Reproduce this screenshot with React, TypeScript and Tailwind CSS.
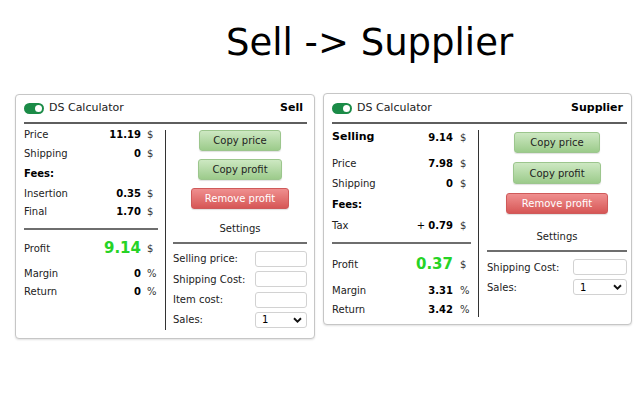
import React from "react";

type RowProps = {
  cls: string;
  label: React.ReactNode;
  value: React.ReactNode;
  unit?: string;
  gap?: string;
};

function Row({ cls, label, value, unit = "$", gap = "ml-[6px]" }: RowProps) {
  return (
    <div className={`flex items-center ${cls}`}>
      <div className="flex-1 text-[#222]">{label}</div>
      <div className="font-bold text-black text-right">{value}</div>
      <div className={`${gap} w-[11px] text-[#333]`}>{unit}</div>
    </div>
  );
}

function Toggle() {
  return (
    <div className="w-[20px] h-[11px] rounded-full bg-[#1b8b47] flex items-center justify-end pr-[2px]">
      <div className="w-[7px] h-[7px] rounded-full bg-white" />
    </div>
  );
}

function Header({ title }: { title: string }) {
  return (
    <>
      <div className="flex items-center h-[20px] pr-[4px]">
        <Toggle />
        <div className="ml-[5px] text-[11px] text-[#222]">DS Calculator</div>
        <div className="ml-auto text-[11px] font-bold text-black">{title}</div>
      </div>
      <div className="mt-[4px] h-[2px] bg-[#5e5e5e]" />
    </>
  );
}

function GreenBtn({ label, cls }: { label: string; cls: string }) {
  return (
    <div
      className={`self-center flex items-center rounded-[3px] border border-[#9cc68d] bg-linear-to-b from-[#cde8c2] to-[#9ccb8b] text-[10px] text-[#1e1e1e] shadow-[0_1px_1px_rgba(0,0,0,0.12)] ${cls}`}
    >
      {label}
    </div>
  );
}

function RedBtn({ cls }: { cls: string }) {
  return (
    <div
      className={`self-center flex items-center rounded-[3px] border border-[#cf5a5a] bg-linear-to-b from-[#ef8f8f] to-[#d65656] text-[10px] text-white shadow-[0_1px_1px_rgba(0,0,0,0.12)] ${cls}`}
    >
      Remove profit
    </div>
  );
}

function Input({ w }: { w: string }) {
  return <div className={`${w} h-[16px] rounded-[3px] border border-[#d2d2d2] bg-white`} />;
}

function Select({ w }: { w: string }) {
  return (
    <div className={`${w} h-[16px] rounded-[3px] border border-[#d2d2d2] bg-white flex items-center pl-[6px] pr-[4px]`}>
      <span className="text-[10px] text-black">1</span>
      <svg className="ml-auto" width="9" height="6" viewBox="0 0 9 6">
        <path d="M1 1.2 L4.5 4.6 L8 1.2" fill="none" stroke="#111" strokeWidth="1.9" />
      </svg>
    </div>
  );
}

function SettingRow({ label, children }: { label: string; children: React.ReactNode }) {
  return (
    <div className="flex items-center h-[20px]">
      <div className="flex-1 text-[10px] text-[#222]">{label}</div>
      {children}
    </div>
  );
}

const green = "text-[15px] font-bold text-[#26d326]";

export default function App() {
  return (
    <div className="w-[640px] h-[400px] bg-white font-['DejaVu_Sans',sans-serif] text-[10px] overflow-hidden">
      <div className="pl-[226px] pt-[21px] text-[37px] leading-[43px] text-black">Sell -&gt; Supplier</div>
      <div className="flex items-start gap-[8px] pl-[15px] mt-[29px]">
        {/* Left card */}
        <div className="w-[300px] mt-[1px] pt-[3px] pl-[8px] pr-[7px] pb-[8px] border border-[#c6c6c6] rounded-[4px] bg-white shadow-[0_1px_2px_rgba(0,0,0,0.12)]">
          <Header title="Sell" />
          <div className="flex items-start">
            <div className="w-[134px] flex flex-col">
              <Row cls="h-[20px]" label="Price" value="11.19" />
              <Row cls="h-[18px]" label="Shipping" value="0" />
              <div className="h-[22px] flex items-center font-bold text-black">Fees:</div>
              <Row cls="h-[18px]" label="Insertion" value="0.35" />
              <Row cls="h-[18px]" label="Final" value="1.70" />
              <div className="mt-[8px] h-[2px] bg-[#6e6e6e]" />
              <Row cls="mt-[7px] h-[22px]" label="Profit" value={<span className={green}>9.14</span>} />
              <Row cls="mt-[5px] h-[18px]" label="Margin" value="0" unit="%" />
              <Row cls="h-[18px]" label="Return" value="0" unit="%" />
            </div>
            <div className="ml-[7px] mt-[6px] h-[200px] w-[142px] border-l border-[#333] pl-[7px] flex flex-col">
              <GreenBtn label="Copy price" cls="h-[21px] px-[13px]" />
              <GreenBtn label="Copy profit" cls="mt-[8px] h-[21px] px-[13px]" />
              <RedBtn cls="mt-[8px] h-[21px] px-[13px]" />
              <div className="mt-[11px] h-[18px] flex items-center justify-center text-[#222]">Settings</div>
              <div className="mt-[4px] h-[2px] bg-[#6e6e6e]" />
              <div className="mt-[5px] flex flex-col gap-[0.4px]">
                <SettingRow label="Selling price:"><Input w="w-[52px]" /></SettingRow>
                <SettingRow label="Shipping Cost:"><Input w="w-[52px]" /></SettingRow>
                <SettingRow label="Item cost:"><Input w="w-[52px]" /></SettingRow>
                <SettingRow label="Sales:"><Select w="w-[52px]" /></SettingRow>
              </div>
            </div>
          </div>
        </div>

        {/* Right card */}
        <div className="w-[309px] pt-[4px] pl-[8px] pr-[4px] pb-[6px] border border-[#c6c6c6] rounded-[4px] bg-white shadow-[0_1px_2px_rgba(0,0,0,0.12)]">
          <Header title="Supplier" />
          <div className="flex items-start">
            <div className="w-[139px] flex flex-col">
              <Row
                cls="mt-[3px] h-[20px]"
                label={<span className="text-[11px] font-bold text-black">Selling</span>}
                value="9.14"
                gap="ml-[7px]"
              />
              <Row cls="mt-[6px] h-[20px]" label="Price" value="7.98" gap="ml-[7px]" />
              <Row cls="h-[20px]" label="Shipping" value="0" gap="ml-[7px]" />
              <div className="mt-[1px] h-[20px] flex items-center font-bold text-black">Fees:</div>
              <Row
                cls="mt-[1px] h-[20px]"
                label="Tax"
                value={
                  <span>
                    <span className="font-normal">+ </span>0.79
                  </span>
                }
                gap="ml-[7px]"
              />
              <div className="mt-[7px] h-[2px] bg-[#6e6e6e]" />
              <Row cls="mt-[9px] h-[22px]" label="Profit" value={<span className={green}>0.37</span>} gap="ml-[7px]" />
              <Row cls="mt-[5px] h-[20px]" label="Margin" value="3.31" unit="%" gap="ml-[7px]" />
              <Row cls="h-[18px]" label="Return" value="3.42" unit="%" gap="ml-[7px]" />
            </div>
            <div className="ml-[7px] mt-[6px] h-[187px] w-[149px] border-l border-[#333] pl-[8px] flex flex-col">
              <GreenBtn label="Copy price" cls="mt-[2px] h-[21px] px-[15px]" />
              <GreenBtn label="Copy profit" cls="mt-[9px] h-[22px] px-[15px]" />
              <RedBtn cls="mt-[9px] h-[21px] px-[15px]" />
              <div className="mt-[13px] h-[18px] flex items-center justify-center text-[#222]">Settings</div>
              <div className="mt-[5px] h-[2px] bg-[#6e6e6e]" />
              <div className="mt-[5px] flex flex-col gap-[0.4px]">
                <SettingRow label="Shipping Cost:"><Input w="w-[54px]" /></SettingRow>
                <SettingRow label="Sales:"><Select w="w-[54px]" /></SettingRow>
              </div>
            </div>
          </div>
        </div>
      </div>
    </div>
  );
}
